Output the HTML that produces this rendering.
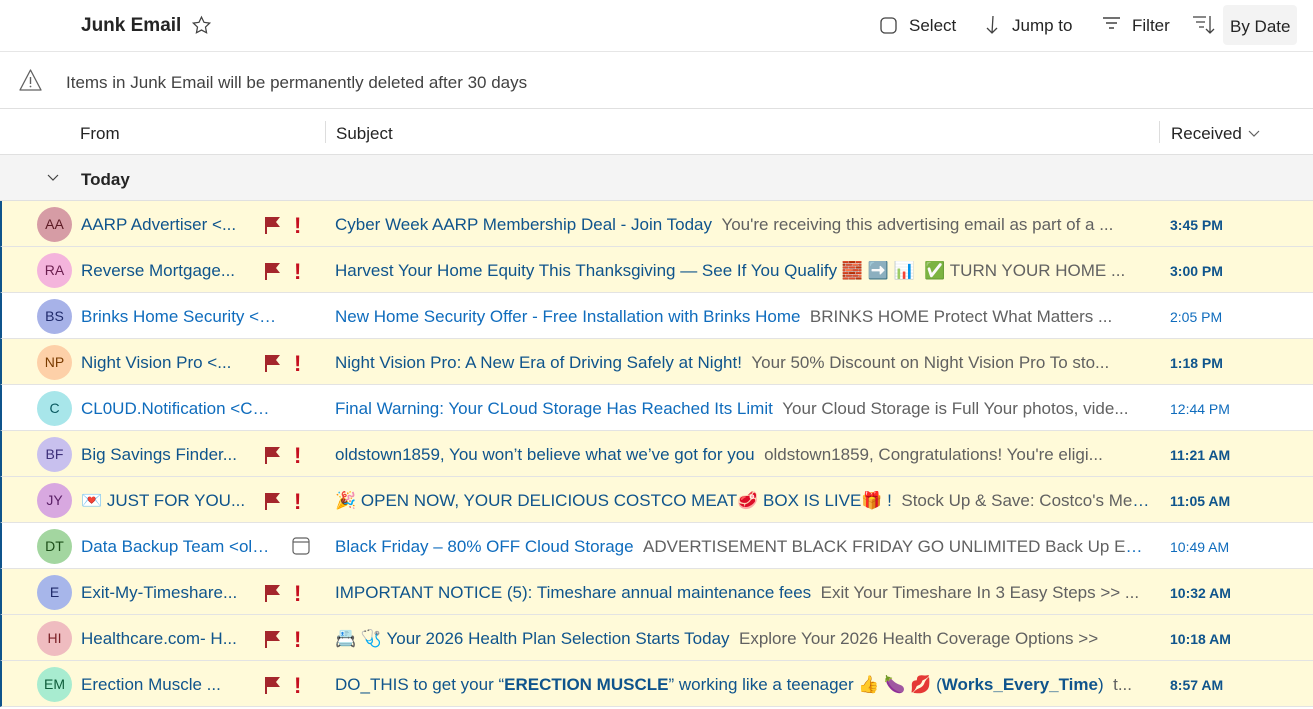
<!DOCTYPE html>
<html><head><meta charset="utf-8"><style>
*{box-sizing:border-box;margin:0;padding:0}
body{width:1313px;height:709px;overflow:hidden;background:#fff;font-family:"Liberation Sans","Noto Sans CJK JP",sans-serif;color:#242424;position:relative}
.top{position:absolute;left:0;top:0;width:1313px;height:52px;border-bottom:1px solid #e6e6e6}
.title{position:absolute;left:81px;top:15px;font-size:19px;font-weight:bold}
.tb{position:absolute;top:16px;font-size:17px;color:#242424}
.banner{position:absolute;top:53px;left:0;width:1313px;height:56px;border-bottom:1px solid #e0e0e0}
.cols{position:absolute;top:109px;left:0;width:1313px;height:46px;border-bottom:1px solid #e0e0e0;font-size:17px}
.grp{position:absolute;top:155px;left:0;width:1313px;height:46px;background:#f4f4f4;border-bottom:1px solid #e0e0e0}
.row{position:absolute;left:0;width:1313px;height:46px;border-bottom:1px solid #e3e3e3;border-left:2px solid #0f548c;background:#fffad9;font-size:17px;white-space:nowrap}
.row.w{background:#fff}
.av{position:absolute;left:35px;top:6px;width:35px;height:35px;border-radius:50%;font-size:14px;text-align:center;line-height:35px}
.fr{position:absolute;left:79px;top:14px;color:#0f548c;width:170px;overflow:hidden;text-overflow:ellipsis}
.w .fr{width:196px}
.w .fr,.w .su{color:#0f6cbd}
.su{position:absolute;left:333px;top:14px;color:#0f548c;width:815px;overflow:hidden;text-overflow:ellipsis}
.pv{color:#616161}
.tm{position:absolute;left:1168px;top:16px;font-size:14px;color:#0f548c;font-weight:bold}
.w .tm{font-weight:normal;color:#0f6cbd}
.fl{position:absolute;left:260px;top:14px}
.ex{position:absolute;left:292px;top:12px;color:#c50f1f;font-weight:bold;font-size:22px}
</style></head><body>
<div class="top">
<div class="title">Junk Email</div>
<svg style="position:absolute;left:191px;top:15px" width="21" height="21" viewBox="0 0 20 20"><path d="M10 2l2.4 5 5.4.7-4 3.8 1 5.4L10 14.3 5.2 16.9l1-5.4-4-3.8 5.4-.7z" fill="none" stroke="#424242" stroke-width="1.2"/></svg>
<svg style="position:absolute;left:879px;top:16px" width="20" height="20" viewBox="0 0 20 20"><rect x="2" y="2" width="15" height="15" rx="4" fill="none" stroke="#424242" stroke-width="1.3"/></svg>
<div class="tb" style="left:909px">Select</div>
<svg style="position:absolute;left:983px;top:14px" width="18" height="22" viewBox="0 0 18 22"><path d="M10 2 L9 19 M4 14 l5 5 5-5" fill="none" stroke="#424242" stroke-width="1.3"/></svg>
<div class="tb" style="left:1012px">Jump to</div>
<svg style="position:absolute;left:1102px;top:16px" width="20" height="16" viewBox="0 0 20 16"><path d="M1 2h17M4 7h11M7 12h5" stroke="#424242" stroke-width="1.4"/></svg>
<div class="tb" style="left:1132px">Filter</div>
<svg style="position:absolute;left:1192px;top:14px" width="24" height="22" viewBox="0 0 24 22"><path d="M1 3h13M4 8h9M7 13h5M18 2v17M14 15l4 4 4-4" fill="none" stroke="#424242" stroke-width="1.3"/></svg>
<div style="position:absolute;left:1223px;top:5px;width:74px;height:40px;background:#f3f3f3;border-radius:4px"></div>
<div class="tb" style="left:1230px;top:17px">By Date</div>
</div>
<div class="banner">
<svg style="position:absolute;left:18px;top:15px" width="25" height="24" viewBox="0 0 25 24"><path d="M12.5 2L23 22H2z" fill="none" stroke="#616161" stroke-width="1.3" stroke-linejoin="round"/><path d="M12.5 9v7" stroke="#616161" stroke-width="1.4"/><circle cx="12.5" cy="18.5" r=".9" fill="#616161"/></svg>
<div style="position:absolute;left:66px;top:20px;font-size:17px;color:#424242">Items in Junk Email will be permanently deleted after 30 days</div>
</div>
<div class="cols">
<div style="position:absolute;left:80px;top:15px">From</div>
<div style="position:absolute;left:325px;top:12px;width:1px;height:22px;background:#ddd"></div>
<div style="position:absolute;left:336px;top:15px">Subject</div>
<div style="position:absolute;left:1159px;top:12px;width:1px;height:22px;background:#ddd"></div>
<div style="position:absolute;left:1171px;top:15px">Received</div>
<svg style="position:absolute;left:1248px;top:21px" width="12" height="8" viewBox="0 0 12 8"><path d="M1 1l5 5 5-5" fill="none" stroke="#616161" stroke-width="1.2"/></svg>
</div>
<div class="grp">
<svg style="position:absolute;left:47px;top:19px" width="12" height="8" viewBox="0 0 12 8"><path d="M1 1l5 5 5-5" fill="none" stroke="#424242" stroke-width="1.2"/></svg>
<div style="position:absolute;left:81px;top:15px;font-size:17px;font-weight:bold">Today</div>
</div>

<div class="row" style="top:201px"><div class="av" style="background:#d69ca5;color:#5c1a24">AA</div><div class="fr">AARP Advertiser &lt;...</div><svg class="fl" width="20" height="20" viewBox="0 0 20 20"><path d="M3 2h15l-4 5 4 5H5v7H3z" fill="#a4262c"/></svg><div class="ex">!</div><div class="su">Cyber Week AARP Membership Deal - Join Today &nbsp;<span class="pv">You're receiving this advertising email as part of a ...</span></div><div class="tm">3:45 PM</div></div>
<div class="row" style="top:247px"><div class="av" style="background:#f4b4dc;color:#6b1f4f">RA</div><div class="fr">Reverse Mortgage...</div><svg class="fl" width="20" height="20" viewBox="0 0 20 20"><path d="M3 2h15l-4 5 4 5H5v7H3z" fill="#a4262c"/></svg><div class="ex">!</div><div class="su">Harvest Your Home Equity This Thanksgiving — See If You Qualify 🧱 ➡️ 📊 &nbsp;<span class="pv">✅ TURN YOUR HOME ...</span></div><div class="tm">3:00 PM</div></div>
<div class="row w" style="top:293px"><div class="av" style="background:#a7b2e8;color:#1f2a6b">BS</div><div class="fr">Brinks Home Security &lt;Brinks</div><div class="su">New Home Security Offer - Free Installation with Brinks Home &nbsp;<span class="pv">BRINKS HOME Protect What Matters ...</span></div><div class="tm">2:05 PM</div></div>
<div class="row" style="top:339px"><div class="av" style="background:#fdd0a8;color:#7a3b00">NP</div><div class="fr">Night Vision Pro &lt;...</div><svg class="fl" width="20" height="20" viewBox="0 0 20 20"><path d="M3 2h15l-4 5 4 5H5v7H3z" fill="#a4262c"/></svg><div class="ex">!</div><div class="su">Night Vision Pro: A New Era of Driving Safely at Night! &nbsp;<span class="pv">Your 50% Discount on Night Vision Pro To sto...</span></div><div class="tm">1:18 PM</div></div>
<div class="row w" style="top:385px"><div class="av" style="background:#a8e6ea;color:#0b5a61">C</div><div class="fr">CL0UD.Notification &lt;CL0UD</div><div class="su">Final Warning: Your CLoud Storage Has Reached Its Limit &nbsp;<span class="pv">Your Cloud Storage is Full Your photos, vide...</span></div><div class="tm">12:44 PM</div></div>
<div class="row" style="top:431px"><div class="av" style="background:#c8c0ee;color:#3d2f7a">BF</div><div class="fr">Big Savings Finder...</div><svg class="fl" width="20" height="20" viewBox="0 0 20 20"><path d="M3 2h15l-4 5 4 5H5v7H3z" fill="#a4262c"/></svg><div class="ex">!</div><div class="su">oldstown1859, You won’t believe what we’ve got for you &nbsp;<span class="pv">oldstown1859, Congratulations! You're eligi...</span></div><div class="tm">11:21 AM</div></div>
<div class="row" style="top:477px"><div class="av" style="background:#d8a8e0;color:#5a1f66">JY</div><div class="fr">💌 JUST FOR YOU...</div><svg class="fl" width="20" height="20" viewBox="0 0 20 20"><path d="M3 2h15l-4 5 4 5H5v7H3z" fill="#a4262c"/></svg><div class="ex">!</div><div class="su">🎉 OPEN NOW, YOUR DELICIOUS COSTCO MEAT🥩 BOX IS LIVE🎁 ! &nbsp;<span class="pv">Stock Up &amp; Save: Costco's Meat...</span></div><div class="tm">11:05 AM</div></div>
<div class="row w" style="top:523px"><div class="av" style="background:#a3d6a0;color:#1b4d18">DT</div><div class="fr" style="width:190px">Data Backup Team &lt;oldstown</div><svg style="position:absolute;left:289px;top:13px" width="20" height="20" viewBox="0 0 20 20"><rect x="2" y="2" width="16" height="16" rx="3" fill="none" stroke="#616161" stroke-width="1.2"/><path d="M2 6h16" stroke="#616161" stroke-width="1.2"/></svg><div class="su">Black Friday – 80% OFF Cloud Storage &nbsp;<span class="pv">ADVERTISEMENT BLACK FRIDAY GO UNLIMITED Back Up Every...</span></div><div class="tm">10:49 AM</div></div>
<div class="row" style="top:569px"><div class="av" style="background:#a7b6ea;color:#1f2a6b">E</div><div class="fr">Exit-My-Timeshare...</div><svg class="fl" width="20" height="20" viewBox="0 0 20 20"><path d="M3 2h15l-4 5 4 5H5v7H3z" fill="#a4262c"/></svg><div class="ex">!</div><div class="su">IMPORTANT NOTICE (5): Timeshare annual maintenance fees &nbsp;<span class="pv">Exit Your Timeshare In 3 Easy Steps &gt;&gt; ...</span></div><div class="tm">10:32 AM</div></div>
<div class="row" style="top:615px"><div class="av" style="background:#efbcc0;color:#7a1f26">HI</div><div class="fr">Healthcare.com- H...</div><svg class="fl" width="20" height="20" viewBox="0 0 20 20"><path d="M3 2h15l-4 5 4 5H5v7H3z" fill="#a4262c"/></svg><div class="ex">!</div><div class="su">📇 🩺 Your 2026 Health Plan Selection Starts Today &nbsp;<span class="pv">Explore Your 2026 Health Coverage Options &gt;&gt;</span></div><div class="tm">10:18 AM</div></div>
<div class="row" style="top:661px"><div class="av" style="background:#a8ecd0;color:#0d5c3a">EM</div><div class="fr">Erection Muscle ...</div><svg class="fl" width="20" height="20" viewBox="0 0 20 20"><path d="M3 2h15l-4 5 4 5H5v7H3z" fill="#a4262c"/></svg><div class="ex">!</div><div class="su">DO_THIS to get your “<b>ERECTION MUSCLE</b>” working like a teenager 👍 🍆 💋 (<b>Works_Every_Time</b>) &nbsp;<span class="pv">t...</span></div><div class="tm">8:57 AM</div></div>
</body></html>
